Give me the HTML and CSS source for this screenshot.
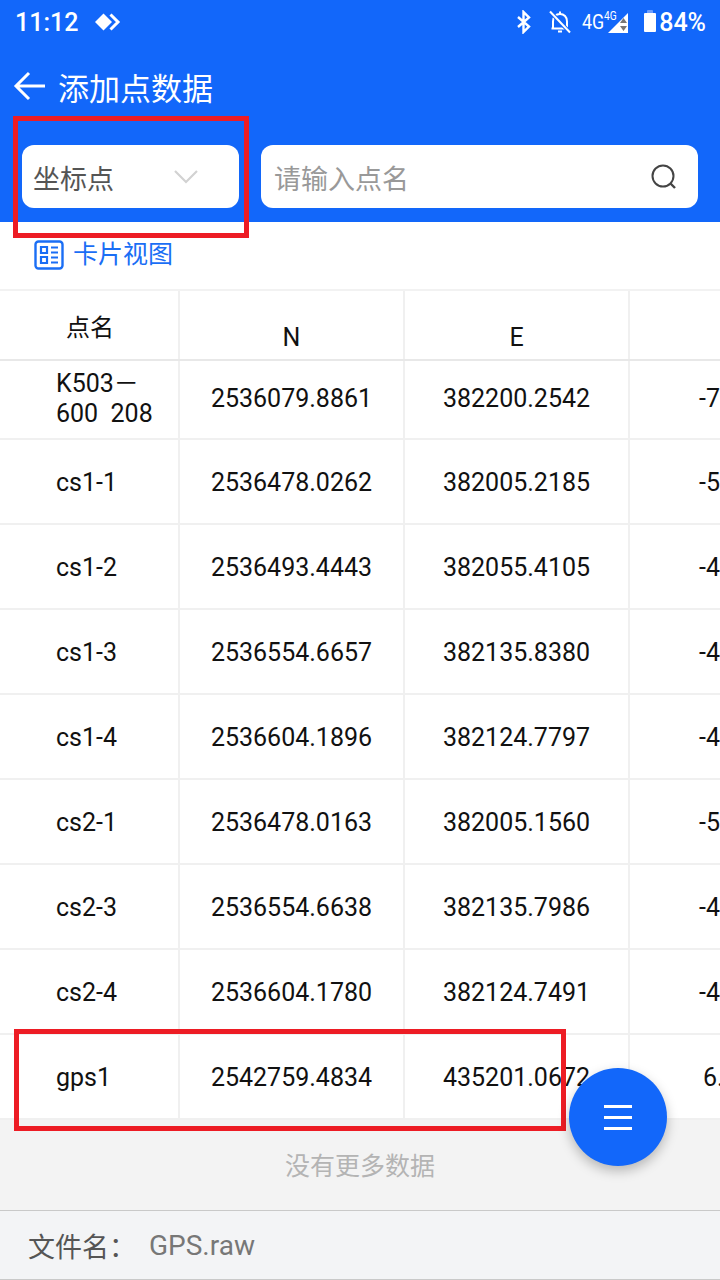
FILE: index.html
```html
<!DOCTYPE html>
<html lang="zh">
<head>
    <meta charset="UTF-8">
    <meta name="viewport" content="width=device-width, initial-scale=1.0">
    <title>添加点数据</title>
    <link rel="stylesheet" href="styles.css">
</head>
<body>
    <header class="top">
        <div class="status">
            <div class="status-left">
                <span class="time">11:12</span>
                <svg class="status-app" width="27" height="18" viewBox="0 0 27 18">
                    <path d="M8.5 .5 17 9 8.5 17.5 0 9Z" fill="#fff"/>
                    <path d="M15.5 1.5 23 9 15.5 16.5" fill="none" stroke="#fff" stroke-width="3"/>
                </svg>
            </div>
            <div class="status-right">
                <svg width="16" height="24" viewBox="0 0 16 24">
                    <path d="M2 7 13 16.5 7.5 22V2L13 7.5 2 17" fill="none" stroke="#fff" stroke-width="2.4"/>
                </svg>
                <svg class="bell" width="22" height="24" viewBox="0 0 22 24">
                    <path d="M4 18.5V11.5C4 7 7 4 11 4S18 7 18 11.5V18.5M2.5 18.5H18M9 21.5H13M11 1.5V4" fill="none" stroke="#fff" stroke-width="2"/>
                    <path d="M1 1.5 21 22.5" stroke="#1267fa" stroke-width="4"/>
                    <path d="M1 1.5 21 22.5" stroke="#fff" stroke-width="2"/>
                </svg>
                <div class="signal">
                    <span class="net">4G</span><span class="net-small">4G</span>
                    <svg width="22" height="22" viewBox="0 0 22 22">
                        <path d="M21 1V21H1Z" fill="#fff"/>
                        <path d="M16.5 6 20 11H13ZM16.5 19 13 14H20Z" fill="#777"/>
                    </svg>
                </div>
                <div class="battery"><span class="battery-cap"></span><span class="battery-body"></span></div>
                <span class="percent">84%</span>
            </div>
        </div>
        <div class="titlebar">
            <svg width="34" height="32" viewBox="0 0 34 32">
                <path d="M32 16H3M16 3 3 16 16 29" fill="none" stroke="#fff" stroke-width="3"/>
            </svg>
            <h1>添加点数据</h1>
        </div>
        <div class="filters">
            <div class="select">
                <span>坐标点</span>
                <svg width="26" height="16" viewBox="0 0 26 16">
                    <path d="M2 2 13 13 24 2" fill="none" stroke="#d2d2d2" stroke-width="2.2"/>
                </svg>
            </div>
            <div class="search">
                <span>请输入点名</span>
                <svg width="28" height="28" viewBox="0 0 28 28">
                    <circle cx="13" cy="13" r="10.5" fill="none" stroke="#444" stroke-width="2"/>
                    <path d="M20.5 20.5 25 25" stroke="#444" stroke-width="2.4"/>
                </svg>
            </div>
        </div>
    </header>

    <div class="view-switch">
        <svg width="30" height="30" viewBox="0 0 30 30">
            <rect x="1.5" y="1.5" width="27" height="27" rx="3" fill="none" stroke="#1a6ef5" stroke-width="2.4"/>
            <path d="M7 7H13V13H7ZM7 17H13V23H7Z" fill="none" stroke="#1a6ef5" stroke-width="2.2"/>
            <path d="M17 7.5H24M17 12.5H24M17 17.5H24M17 22.5H24" stroke="#1a6ef5" stroke-width="2.2"/>
        </svg>
        <span>卡片视图</span>
    </div>

    <div class="table">
        <div class="row row-head">
            <div class="cell name name-head">点名</div>
            <div class="cell col-head">N</div>
            <div class="cell col-head">E</div>
            <div class="cell"></div>
        </div>
        <div class="row row-first">
            <div class="cell name">K503－<br>600&nbsp;&nbsp;208</div>
            <div class="cell">2536079.8861</div>
            <div class="cell">382200.2542</div>
            <div class="cell clip">-7</div>
        </div>
        <div class="row">
            <div class="cell name">cs1-1</div>
            <div class="cell">2536478.0262</div>
            <div class="cell">382005.2185</div>
            <div class="cell clip">-5</div>
        </div>
        <div class="row">
            <div class="cell name">cs1-2</div>
            <div class="cell">2536493.4443</div>
            <div class="cell">382055.4105</div>
            <div class="cell clip">-4</div>
        </div>
        <div class="row">
            <div class="cell name">cs1-3</div>
            <div class="cell">2536554.6657</div>
            <div class="cell">382135.8380</div>
            <div class="cell clip">-4</div>
        </div>
        <div class="row">
            <div class="cell name">cs1-4</div>
            <div class="cell">2536604.1896</div>
            <div class="cell">382124.7797</div>
            <div class="cell clip">-4</div>
        </div>
        <div class="row">
            <div class="cell name">cs2-1</div>
            <div class="cell">2536478.0163</div>
            <div class="cell">382005.1560</div>
            <div class="cell clip">-5</div>
        </div>
        <div class="row">
            <div class="cell name">cs2-3</div>
            <div class="cell">2536554.6638</div>
            <div class="cell">382135.7986</div>
            <div class="cell clip">-4</div>
        </div>
        <div class="row">
            <div class="cell name">cs2-4</div>
            <div class="cell">2536604.1780</div>
            <div class="cell">382124.7491</div>
            <div class="cell clip">-4</div>
        </div>
        <div class="row">
            <div class="cell name">gps1</div>
            <div class="cell">2542759.4834</div>
            <div class="cell">435201.0672</div>
            <div class="cell clip clip-pos">6.</div>
        </div>
    </div>

    <div class="no-more">没有更多数据</div>

    <footer class="file-bar">
        <span class="file-label">文件名：</span>
        <span class="file-name">GPS.raw</span>
    </footer>

    <div class="mark mark-select"></div>
    <div class="mark mark-row"></div>

    <button class="fab">
        <span></span><span></span><span></span>
    </button>
</body>
</html>
```

FILE: styles.css
```css
* {
    box-sizing: border-box;
}
html, body {
    margin: 0;
    height: 1280px;
    overflow: hidden;
}
body {
    position: relative;
    width: 720px;
    display: flex;
    flex-direction: column;
    font-family: Roboto, "Noto Sans CJK SC", sans-serif;
    background-color: #f3f3f3;
    color: #111;
}
.top {
    height: 222px;
    flex-shrink: 0;
    background-color: #1267fa;
    color: #fff;
}
.status {
    height: 44px;
    display: flex;
    justify-content: space-between;
    align-items: center;
    padding: 0 14px 0 15px;
}
.status-left, .status-right {
    display: flex;
    align-items: center;
}
.time {
    font-size: 25px;
    font-weight: 500;
}
.status-app {
    margin-left: 17px;
}
.bell {
    margin-left: 17px;
}
.signal {
    display: flex;
    align-items: flex-start;
    margin-left: 11px;
    height: 24px;
}
.net {
    font-size: 21px;
    line-height: 24px;
    transform: scaleX(0.85);
    transform-origin: left;
    width: 22px;
}
.net-small {
    font-size: 12px;
    line-height: 14px;
    margin-top: -1px;
    width: 12px;
    transform: scaleX(0.85);
    transform-origin: left;
}
.signal svg {
    margin-left: -9px;
    margin-top: 2px;
}
.battery {
    display: flex;
    flex-direction: column;
    align-items: center;
    margin-left: 15px;
    width: 12px;
    margin-top: -2px;
}
.battery-cap {
    width: 6px;
    height: 3px;
    background-color: #6f9ffb;
    border-radius: 1px 1px 0 0;
}
.battery-body {
    width: 12px;
    height: 19px;
    background-color: #fff;
    border-radius: 1px;
}
.percent {
    font-size: 25px;
    font-weight: 500;
    margin-left: 3px;
}
.titlebar {
    height: 58px;
    margin-top: 13px;
    display: flex;
    align-items: center;
    padding-left: 13px;
}
.titlebar h1 {
    margin: 0 0 0 11px;
    font-size: 31px;
    font-weight: 400;
}
.filters {
    display: flex;
    gap: 22px;
    margin-top: 30px;
    padding-left: 22px;
}
.select, .search {
    height: 63px;
    background-color: #fff;
    border-radius: 12px;
    display: flex;
    justify-content: space-between;
    align-items: center;
    font-size: 27px;
}
.select span, .search span {
    margin-top: 1px;
}
.select {
    width: 217px;
    padding: 0 40px 0 11px;
    color: #555;
}
.search {
    width: 437px;
    padding: 0 20px 0 13px;
    color: #999;
}
.view-switch {
    height: 67px;
    flex-shrink: 0;
    background-color: #fff;
    display: flex;
    align-items: flex-start;
    gap: 9px;
    padding: 18px 0 0 34px;
    color: #1a6ef5;
    font-size: 25px;
    line-height: 30px;
}
.table {
    flex-shrink: 0;
    background-color: #fff;
    border-top: 2px solid #f2f2f2;
    overflow: hidden;
}
.row {
    display: flex;
    height: 85px;
    width: 855px;
    border-bottom: 2px solid #f0f0f0;
}
.row-head {
    height: 70px;
    border-bottom-color: #e8e8e8;
}
.row-first {
    height: 79px;
}
.cell {
    width: 225px;
    display: flex;
    justify-content: center;
    align-items: center;
    padding-top: 2px;
    font-size: 25px;
    border-right: 2px solid #f0f0f0;
    white-space: nowrap;
}
.row .name {
    width: 180px;
    justify-content: flex-start;
    padding: 2px 0 0 56px;
    line-height: 30px;
}
.row .name-head {
    font-size: 24px;
    justify-content: center;
    padding: 5px 0 0 2px;
}
.row-first .cell {
    padding-top: 0;
    padding-bottom: 2px;
}
.col-head {
    padding-top: 24px;
}
.clip {
    justify-content: flex-start;
    padding-left: 69px;
}
.clip-pos {
    padding-left: 73px;
}
.no-more {
    height: 90px;
    flex-shrink: 0;
    display: flex;
    justify-content: center;
    align-items: center;
    padding-bottom: 2px;
    font-size: 25px;
    color: #b4b4b4;
}
.file-bar {
    flex: 1;
    display: flex;
    align-items: center;
    padding-left: 28px;
    background-color: #f3f4f6;
    border-top: 1px solid #c9c9c9;
    border-bottom: 1px solid #c9c9c9;
}
.file-label {
    font-size: 27px;
    color: #555;
    width: 121px;
}
.file-name {
    font-size: 28px;
    color: #777;
}
.mark {
    position: absolute;
    border: 5px solid #ed1c24;
}
.mark-select {
    left: 13px;
    top: 116px;
    width: 236px;
    height: 122px;
}
.mark-row {
    left: 14px;
    top: 1029px;
    width: 552px;
    height: 102px;
}
.fab {
    position: absolute;
    left: 569px;
    top: 1068px;
    width: 98px;
    height: 98px;
    padding: 0;
    border: 0;
    border-radius: 50%;
    background-color: #1267fa;
    box-shadow: 0 5px 12px rgba(0, 0, 0, 0.25);
    display: flex;
    flex-direction: column;
    justify-content: center;
    align-items: center;
    gap: 8px;
}
.fab span {
    width: 28px;
    height: 3px;
    background-color: #fff;
}
```
